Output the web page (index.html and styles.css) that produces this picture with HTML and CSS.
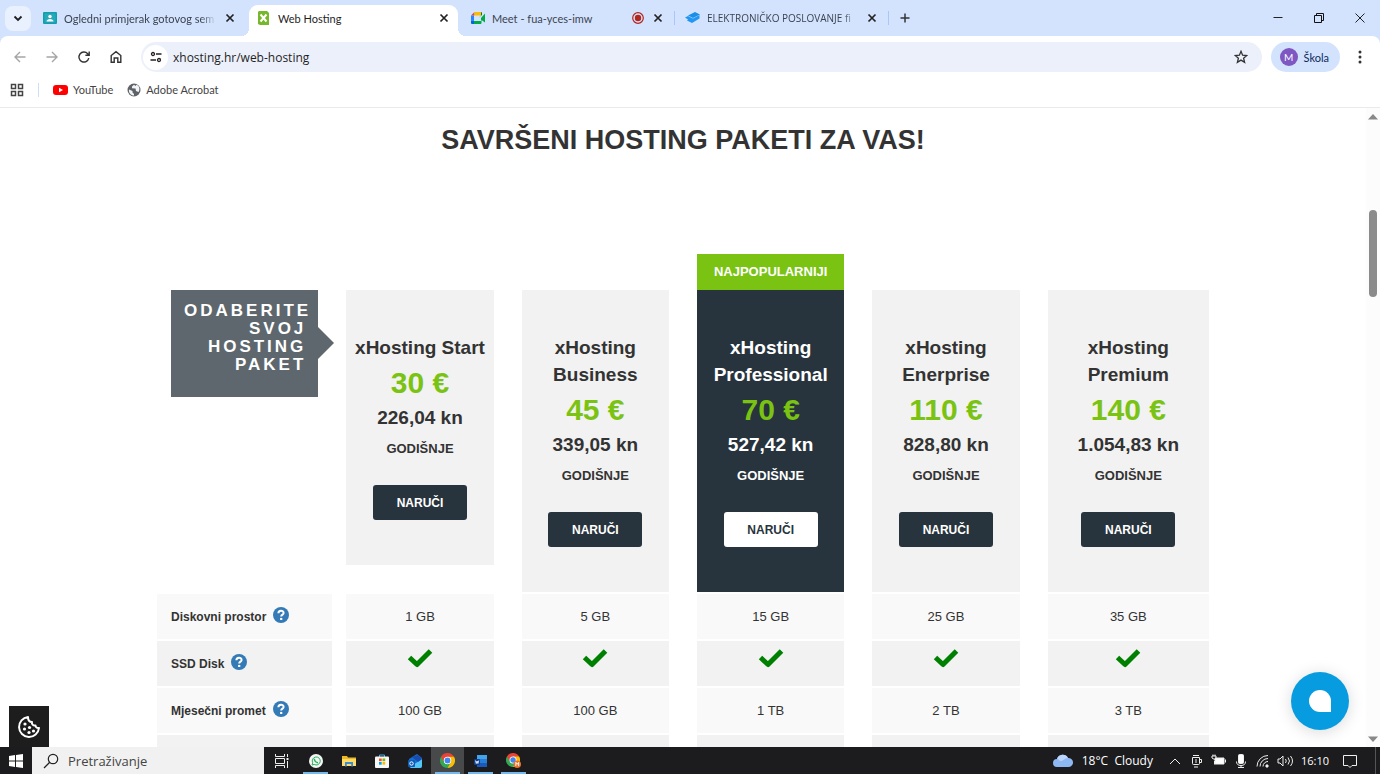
FILE: index.html
```html
<!DOCTYPE html>
<html lang="hr">
<head>
    <meta charset="UTF-8">
    <meta name="viewport" content="width=device-width, initial-scale=1.0">
    <title>Web Hosting</title>
    <link rel="stylesheet" href="styles.css">
</head>
<body>
    <!-- shared icons -->
    <svg class="defs" aria-hidden="true">
        <symbol id="i-x" viewBox="0 0 14 14"><path d="M3.5 3.5l7 7M10.500 3.500l-7 7" stroke="currentColor" stroke-width="1.7" fill="none"/></symbol>
        <symbol id="i-check" viewBox="0 0 26 20"><path d="M2.500 9.500L10 16.500L23.500 3" stroke="#008000" stroke-width="5" fill="none" stroke-linejoin="round"/></symbol>
        <symbol id="i-help" viewBox="0 0 16 16"><circle cx="8" cy="8" r="8" fill="#337ab7"/><path d="M5.400 6.200C5.400 2.900 10.600 2.900 10.600 5.900C10.600 7.700 8.200 7.600 8.200 9.600" stroke="#fff" stroke-width="2" fill="none"/><path d="M7.100 10.900h2.200v2.100H7.100z" fill="#fff"/></symbol>
        <symbol id="i-chrome" viewBox="0 0 16 16"><path d="M8 8L1.070 4A8 8 0 0 1 14.930 4z" fill="#ea4335"/><path d="M8 8L14.930 4A8 8 0 0 1 8 16z" fill="#fbbc04"/><path d="M8 8V16A8 8 0 0 1 1.070 4z" fill="#34a853"/><path d="M8 4h6.900L11.500 10z" fill="#fbbc04"/><path d="M1.100 4l3.500 6L8 4z" fill="#ea4335"/><path d="M4.500 10L8 16l3.500-6z" fill="#34a853"/><circle cx="8" cy="8" r="4" fill="#fff"/><circle cx="8" cy="8" r="3.100" fill="#4285f4"/></symbol>
    </svg>

    <header class="browser">
        <div class="tabstrip">
            <button class="tab-search" aria-label="Pretraži kartice"><svg width="12" height="12" viewBox="0 0 12 12"><path d="M2.500 4.500L6 8l3.500-3.500" stroke="#1f1f1f" stroke-width="1.800" fill="none"/></svg></button>
            <div class="tab">
                <svg width="14" height="14" viewBox="0 0 14 14"><rect y="1" width="14" height="12" rx="1" fill="#129eaf"/><rect x="1.500" y="2.500" width="11" height="9" fill="#26a9b8"/><circle cx="7" cy="5.500" r="1.700" fill="#fff"/><path d="M3.500 10.500c0-3.500 7-3.500 7 0z" fill="#fff"/></svg>
                <span class="tab-title faded">Ogledni primjerak gotovog sem</span>
                <button class="tab-close" aria-label="Zatvori"><svg width="14" height="14"><use href="#i-x"/></svg></button>
            </div>
            <span class="tab-sep"></span>
            <div class="tab active">
                <svg width="14" height="14" viewBox="0 0 14 14"><path d="M2 0h8l2 2v12H3l-2-1V1z" fill="#76b82a"/><path d="M3.500 3.500l6 7M9.500 3.500l-6 7" stroke="#fff" stroke-width="2"/></svg>
                <span class="tab-title">Web Hosting</span>
                <button class="tab-close" aria-label="Zatvori"><svg width="14" height="14"><use href="#i-x"/></svg></button>
            </div>
            <span class="tab-sep"></span>
            <div class="tab">
                <svg width="14" height="14" viewBox="0 0 14 14"><path d="M0 4.500L3.500 1v3.500z" fill="#ea4335"/><path d="M3.500 1h6.500v3.500h-6.500z" fill="#fbbc04"/><path d="M0 4.500h3v5H0z" fill="#2684fc"/><path d="M0 9.500h3V13H1q-1 0-1-1z" fill="#0066da"/><path d="M3 10h7V7l4-4.500v9L10.500 9v3q0 1-1 1H3z" fill="#00ac47"/><path d="M7.500 7L11 4V2q0-1-1-1v3.500z" fill="#00832d"/></svg>
                <span class="tab-title">Meet - fua-yces-imw</span>
                <svg class="rec" width="12" height="12" viewBox="0 0 12 12"><circle cx="6" cy="6" r="5.300" fill="none" stroke="#b3261e" stroke-width="1.200"/><circle cx="6" cy="6" r="3.200" fill="#b3261e"/></svg>
                <button class="tab-close" aria-label="Zatvori"><svg width="14" height="14"><use href="#i-x"/></svg></button>
            </div>
            <span class="tab-sep shown"></span>
            <div class="tab">
                <svg width="15" height="14" viewBox="0 0 15 14"><path d="M3 4.500L10 1l5 2.500L8 7z" fill="#1a8fe8"/><path d="M0 6.500l3-1.500 5 2.500L14.500 4v3.500L7 12l-5-2.500 1-1z" fill="#2196f3"/></svg>
                <span class="tab-title faded caps">ELEKTRONIČKO POSLOVANJE fi</span>
                <button class="tab-close" aria-label="Zatvori"><svg width="14" height="14"><use href="#i-x"/></svg></button>
            </div>
            <span class="tab-sep shown"></span>
            <button class="tab-new" aria-label="Nova kartica"><svg width="12" height="12" viewBox="0 0 12 12"><path d="M6 1.500v9M1.500 6h9" stroke="#333" stroke-width="1.500"/></svg></button>
            <div class="win-controls">
                <button aria-label="Smanji"><svg width="12" height="12" viewBox="0 0 12 12"><path d="M1.500 5.500h9" stroke="#222"/></svg></button>
                <button aria-label="Vrati"><svg width="12" height="12" viewBox="0 0 12 12"><path d="M1.500 3.500h7v7h-7zM3.500 3.500v-2h7v7h-2" stroke="#111" fill="none"/></svg></button>
                <button aria-label="Zatvori prozor"><svg width="12" height="12" viewBox="0 0 12 12"><path d="M1.500 1.500l9 9M10.500 1.500l-9 9" stroke="#222"/></svg></button>
            </div>
        </div>

        <div class="toolbar">
            <button class="nav off" aria-label="Natrag"><svg width="14" height="14" viewBox="0 0 14 14"><path d="M12.500 7H2.500M7 2L2 7l5 5"/></svg></button>
            <button class="nav off" aria-label="Naprijed"><svg width="14" height="14" viewBox="0 0 14 14"><path d="M1.500 7h10M7 2l5 5-5 5"/></svg></button>
            <button class="nav" aria-label="Osvježi"><svg width="14" height="14" viewBox="0 0 14 14"><path d="M11.800 8.200A5 5 0 1 1 10.700 3.700L12 5M12.200 1.500V5.300H8.400"/></svg></button>
            <button class="nav" aria-label="Početna"><svg width="14" height="14" viewBox="0 0 14 14"><path d="M2.200 12.300V5.500L7 1.700l4.800 3.800v6.800H8.800V8H5.200v4.300z"/></svg></button>
            <div class="omnibox">
                <button class="site-info" aria-label="Informacije o web-lokaciji"><svg width="12" height="12" viewBox="0 0 12 12"><path d="M6 3h5.500M.5 9H6" stroke="#222" stroke-width="1.400"/><circle cx="3" cy="3" r="1.500" fill="none" stroke="#222" stroke-width="1.300"/><circle cx="9" cy="9" r="1.500" fill="none" stroke="#222" stroke-width="1.300"/></svg></button>
                <input class="url" type="text" aria-label="Adresa" value="xhosting.hr/web-hosting">
                <button class="star" aria-label="Označi"><svg width="14" height="14" viewBox="0 0 14 14"><path d="M7 1.300l1.600 3.900 4.200.3-3.200 2.700 1 4.100L7 10.100l-3.600 2.200 1-4.100L1.200 5.500l4.200-.3z" fill="none" stroke="#333" stroke-width="1.300"/></svg></button>
            </div>
            <button class="profile"><span class="avatar">M</span>Škola</button>
            <button class="menu" aria-label="Izbornik"><svg width="4" height="14" viewBox="0 0 4 14"><circle cx="2" cy="2" r="1.500"/><circle cx="2" cy="7" r="1.500"/><circle cx="2" cy="12" r="1.500"/></svg></button>
        </div>

        <nav class="bookmarks">
            <button class="apps" aria-label="Aplikacije"><svg width="14" height="14" viewBox="0 0 14 14"><path d="M1.500 1.500h4v4h-4zM8.500 1.500h4v4h-4zM1.500 8.500h4v4h-4zM8.500 8.500h4v4h-4z" fill="none" stroke="#444" stroke-width="1.500"/></svg></button>
            <a href="#"><svg width="15" height="12" viewBox="0 0 15 12"><rect y="1" width="15" height="10" rx="3" fill="#f00"/><path d="M6 3.800v4.400L10 6z" fill="#fff"/></svg>YouTube</a>
            <a href="#"><svg width="14" height="14" viewBox="0 0 14 14"><circle cx="7" cy="7" r="6.500" fill="#5f6368"/><path d="M2 6.500l3.500 1.500v1.500L7 11v1.500C4 12.500 1.500 10 2 6.500zM7 1.800L5 3.500v1.700l3.500.3L9 8l2.500 1c2-3 .5-6.500-2-7.300L8.500 3z" fill="#f2f4f7"/></svg>Adobe Acrobat</a>
        </nav>
    </header>

    <div class="viewport">
        <main class="page">
            <h1>SAVRŠENI HOSTING PAKETI ZA VAS!</h1>
            <table class="plans">
                <thead>
                    <tr>
                        <td><div class="choose">ODABERITE SVOJ HOSTING PAKET</div></td>
                        <th><div class="card">
                            <h2>xHosting Start</h2>
                            <p class="eur">30 €</p>
                            <p class="kn">226,04 kn</p>
                            <p class="period">GODIŠNJE</p>
                            <button class="order">NARUČI</button>
                        </div></th>
                        <th><div class="card">
                            <h2>xHosting Business</h2>
                            <p class="eur">45 €</p>
                            <p class="kn">339,05 kn</p>
                            <p class="period">GODIŠNJE</p>
                            <button class="order">NARUČI</button>
                        </div></th>
                        <th><div class="card popular">
                            <span class="ribbon">NAJPOPULARNIJI</span>
                            <h2>xHosting Professional</h2>
                            <p class="eur">70 €</p>
                            <p class="kn">527,42 kn</p>
                            <p class="period">GODIŠNJE</p>
                            <button class="order">NARUČI</button>
                        </div></th>
                        <th><div class="card">
                            <h2>xHosting Enerprise</h2>
                            <p class="eur">110 €</p>
                            <p class="kn">828,80 kn</p>
                            <p class="period">GODIŠNJE</p>
                            <button class="order">NARUČI</button>
                        </div></th>
                        <th><div class="card">
                            <h2>xHosting Premium</h2>
                            <p class="eur">140 €</p>
                            <p class="kn">1.054,83 kn</p>
                            <p class="period">GODIŠNJE</p>
                            <button class="order">NARUČI</button>
                        </div></th>
                    </tr>
                </thead>
                <tbody>
                    <tr>
                        <th scope="row"><div class="label">Diskovni prostor <svg width="16" height="16"><use href="#i-help"/></svg></div></th>
                        <td><div class="value">1 GB</div></td>
                        <td><div class="value">5 GB</div></td>
                        <td><div class="value">15 GB</div></td>
                        <td><div class="value">25 GB</div></td>
                        <td><div class="value">35 GB</div></td>
                    </tr>
                    <tr>
                        <th scope="row"><div class="label">SSD Disk <svg width="16" height="16"><use href="#i-help"/></svg></div></th>
                        <td><div class="value"><svg width="26" height="20"><use href="#i-check"/></svg></div></td>
                        <td><div class="value"><svg width="26" height="20"><use href="#i-check"/></svg></div></td>
                        <td><div class="value"><svg width="26" height="20"><use href="#i-check"/></svg></div></td>
                        <td><div class="value"><svg width="26" height="20"><use href="#i-check"/></svg></div></td>
                        <td><div class="value"><svg width="26" height="20"><use href="#i-check"/></svg></div></td>
                    </tr>
                    <tr>
                        <th scope="row"><div class="label">Mjesečni promet <svg width="16" height="16"><use href="#i-help"/></svg></div></th>
                        <td><div class="value">100 GB</div></td>
                        <td><div class="value">100 GB</div></td>
                        <td><div class="value">1 TB</div></td>
                        <td><div class="value">2 TB</div></td>
                        <td><div class="value">3 TB</div></td>
                    </tr>
                    <tr>
                        <th scope="row"><div class="label"></div></th>
                        <td><div class="value"></div></td>
                        <td><div class="value"></div></td>
                        <td><div class="value"></div></td>
                        <td><div class="value"></div></td>
                        <td><div class="value"></div></td>
                    </tr>
                </tbody>
            </table>
        </main>
        <div class="scrollbar">
            <svg width="10" height="6" viewBox="0 0 10 6"><path d="M5 0l5 5.500H0z" fill="#888"/></svg>
            <div class="thumb"></div>
            <svg width="10" height="6" viewBox="0 0 10 6"><path d="M5 6l5-5.500H0z" fill="#888"/></svg>
        </div>
        <button class="cookies" aria-label="Kolačići"><svg width="24" height="24" viewBox="0 0 24 24"><path d="M11 2A10 10 0 1 0 22 13C20 13.500 18.500 12 18.500 10.500C16 11 14.500 9 15 7C12.500 7 11 5 11 2z" fill="none" stroke="#fff" stroke-width="2" stroke-linejoin="round"/><g fill="#fff"><circle cx="8" cy="9" r="1.600"/><circle cx="7.500" cy="14" r="1.600"/><circle cx="12.500" cy="12.500" r="1.600"/><circle cx="12" cy="17.500" r="1.600"/><circle cx="16.500" cy="16" r="1.600"/></g></svg></button>
        <button class="chat" aria-label="Chat"><svg width="22" height="22" viewBox="0 0 22 22"><path d="M11 0A11 11 0 0 1 22 11V22H11A11 11 0 0 1 11 0z" fill="#fff"/></svg></button>
    </div>

    <footer class="taskbar">
        <button class="start" aria-label="Start"><svg width="16" height="16" viewBox="0 0 16 16"><path d="M1 3l6-.9v5.400H1zM8 2l7-1v6.500H8zM1 8.500h6v5.400L1 13zM8 8.500h7V15l-7-1z" fill="#fff"/></svg></button>
        <label class="search">
            <svg width="16" height="16" viewBox="0 0 16 16"><circle cx="10" cy="6" r="4.700" fill="none" stroke="#222" stroke-width="1.200"/><path d="M6.700 9.300L1 15" stroke="#222" stroke-width="1.300"/></svg>
            <input type="text" placeholder="Pretraživanje" aria-label="Pretraživanje">
        </label>
        <button class="task-view" aria-label="Prikaz zadataka"><svg width="16" height="16" viewBox="0 0 16 16"><path d="M1.500 1v2.500h9V1M1.500 5.500h9v5h-9zM1.500 15v-2.500h9V15M13.500 1v3M13.500 8v7" fill="none" stroke="#eee"/><path d="M12.500 5h2v2h-2z" fill="#eee"/></svg></button>
        <div class="apps-bar">
            <button class="open" aria-label="WhatsApp"><svg width="14" height="14" viewBox="0 0 14 14"><circle cx="7" cy="7" r="7" fill="#f4f4f4"/><path d="M3 11l.7-2.200A4 4 0 1 1 5.200 10.400z" fill="none" stroke="#25b35a"/><path d="M5.300 4.800c.2 2.300 1.800 3.700 3.700 3.900" fill="none" stroke="#25b35a" stroke-width="1.400"/></svg></button>
            <button aria-label="Eksplorer"><svg width="14" height="14" viewBox="0 0 14 14"><path d="M0 2h5l1 1.500h8V12H0z" fill="#f2b91f"/><path d="M0 5h14v7H0z" fill="#ffdc69"/><path d="M3 8h8v4.500H9.200V10H4.800v2.500H3z" fill="#3a8ad6"/></svg></button>
            <button aria-label="Store"><svg width="14" height="14" viewBox="0 0 14 14"><path d="M4.500 3V1h5v2" fill="none" stroke="#43b1e5"/><rect y="2.500" width="14" height="11.500" rx="1" fill="#f7f7f7"/><path d="M4 4.500h2.700v2.700H4z" fill="#f25022"/><path d="M7.500 4.500h2.700v2.700H7.500z" fill="#7fba00"/><path d="M4 8h2.700v2.700H4z" fill="#00a4ef"/><path d="M7.500 8h2.700v2.700H7.500z" fill="#ffb900"/></svg></button>
            <button aria-label="Outlook"><svg width="14" height="14" viewBox="0 0 14 14"><path d="M1 5l8-5 5 4v8q0 2-2 2H3q-2 0-2-2z" fill="#1270d4"/><path d="M2 13L14 5v7q0 2-2 2H3z" fill="#54c5f5"/><path d="M4 3l6 5 4-3-4-4z" fill="#1a4bb0"/><rect y="6" width="7" height="7" rx="1" fill="#0f5bb5"/><circle cx="3.500" cy="9.500" r="1.700" fill="none" stroke="#fff"/></svg></button>
            <button class="open current" aria-label="Chrome"><svg width="15" height="15"><use href="#i-chrome"/></svg></button>
            <button class="open" aria-label="Word"><svg width="14" height="14" viewBox="0 0 14 14"><path d="M3 1h10v4H3z" fill="#41a5ee"/><path d="M3 5h10v4H3z" fill="#2b7cd3"/><path d="M3 9h10v4H3z" fill="#185abd"/><rect y="5" width="6" height="6" rx="1" fill="#103f91"/><path d="M1.500 6.500l.8 3 .8-2.500.8 2.500.8-3" fill="none" stroke="#fff" stroke-width=".8"/></svg></button>
            <button class="open" aria-label="Chrome profil"><svg width="15" height="15" viewBox="0 0 16 16"><use href="#i-chrome" width="15" height="15"/><circle cx="12" cy="12" r="4" fill="#e8702a"/><path d="M10.500 14v-4l1.500 2 1.500-2v4" fill="none" stroke="#fff"/></svg></button>
        </div>
        <div class="tray">
            <svg width="22" height="15" viewBox="0 0 22 15"><path d="M5 14a4 4 0 0 1 0-8A6 6 0 0 1 16 5a4.500 4.500 0 0 1 1 9z" fill="#8db8f4"/><path d="M5 6A6 6 0 0 1 16 5C12 5 12 8 9 8 7 8 7 6 5 6z" fill="#bcd5fa"/></svg>
            <span class="weather">18°C&nbsp; Cloudy</span>
            <div class="tray-icons">
                <svg width="16" height="16" viewBox="0 0 16 16"><path d="M3 11l5-5 5 5"/></svg>
                <svg width="16" height="16" viewBox="0 0 16 16"><path d="M3.500 4.500h7v6q0 1-1 1h-5q-1 0-1-1zM10.500 6.500h2v3h-2M4 2.500h6M5 14h4M7 6v4"/></svg>
                <svg width="16" height="16" viewBox="0 0 16 16"><path d="M4 5h9v6H4z" fill="#fff"/><path d="M14.500 6.500v3M3.500 11.500V8M1 3h4v2L3.500 6.500 1 5zM2 1.500V3M4 1.500V3"/></svg>
                <svg width="16" height="16" viewBox="0 0 16 16"><rect x="5.500" y="1.500" width="5" height="9" rx="1" fill="#fff"/><path d="M3.500 8.500q0 4 4.500 4t4.500-4M8 12v3M5 14.500h6"/></svg>
                <svg width="16" height="16" viewBox="0 0 16 16"><path d="M2 13.500A11 11 0 0 1 13 2.500M5 13.500a8 8 0 0 1 8-8M8 13.500a5 5 0 0 1 5-5"/><circle cx="12" cy="13" r="1.200" fill="#fff"/></svg>
                <svg width="16" height="16" viewBox="0 0 16 16"><path d="M1 6h2l3-3v10l-3-3H1zM8.500 6q1.500 2 0 4M11 4.500q3 3.500 0 7M13.500 3q4 5 0 10"/></svg>
            </div>
            <time>16:10</time>
            <button class="notice" aria-label="Obavijesti"><svg width="16" height="16" viewBox="0 0 16 16"><path d="M1.500 2.500h13v10h-4.500l-2 2-2-2H1.500z" fill="none" stroke="#eee"/></svg></button>
            <span class="desktop-edge"></span>
        </div>
    </footer>
</body>
</html>
```

FILE: styles.css
```css
* {
    box-sizing: border-box;
}

body {
    margin: 0;
    height: 100vh;
    display: flex;
    flex-direction: column;
    overflow: hidden;
    background: #fff;
    color: #333;
    font-family: "Open Sans", "Noto Sans", sans-serif;
    font-size: 11px;
}

button {
    border: 0;
    padding: 0;
    background: none;
    font: inherit;
    color: inherit;
    display: flex;
    align-items: center;
    justify-content: center;
    cursor: pointer;
}

svg {
    flex: none;
}

.defs {
    position: absolute;
    width: 0;
    height: 0;
}

/* browser window */
.browser {
    background: #d3e3fd;
    flex: none;
    font-family: Lato, "Open Sans", sans-serif;
}

.tabstrip {
    display: flex;
    align-items: center;
    height: 36px;
    padding-left: 5px;
}

.tab-search {
    width: 26px;
    height: 25px;
    margin-right: 4px;
    border-radius: 8px;
    background: #e9f1fe;
}

.tab {
    position: relative;
    display: flex;
    align-items: center;
    gap: 7px;
    width: 209px;
    height: 31px;
    margin-top: 5px;
    padding: 0 7px 5px 8px;
    color: #3c4350;
}

.tab.active {
    background: #fff;
    border-radius: 9px 9px 0 0;
    color: #1f1f1f;
}

/* flared feet of the active tab */
.tab.active::before,
.tab.active::after {
    content: "";
    position: absolute;
    bottom: 0;
    width: 8px;
    height: 8px;
}

.tab.active::before {
    right: 100%;
    background: radial-gradient(circle at 0 0, #d3e3fd 8px, #fff 8px);
}

.tab.active::after {
    left: 100%;
    background: radial-gradient(circle at 100% 0, #d3e3fd 8px, #fff 8px);
}

.tab-title {
    flex: 1;
    overflow: hidden;
    white-space: nowrap;
}

.tab-title.faded {
    -webkit-mask-image: linear-gradient(to right, #000 90%, transparent);
    mask-image: linear-gradient(to right, #000 90%, transparent);
}

.tab-title.caps {
    font-family: "Open Sans", "Noto Sans", sans-serif;
    font-size: 10px;
}

.tab-close {
    color: #222;
}

.tab-sep {
    width: 1px;
    height: 14px;
    margin: 0 2px;
}

.tab-sep.shown {
    background: #a8c7fa;
}

.tab-new {
    width: 28px;
    height: 28px;
}

.win-controls {
    display: flex;
    margin-left: auto;
}

.win-controls button {
    width: 41px;
    height: 36px;
}

.toolbar {
    display: flex;
    align-items: center;
    height: 40px;
    padding: 2px 8px 0 4px;
    background: #fff;
    border-radius: 8px 8px 0 0;
}

.nav {
    width: 32px;
    height: 32px;
}

.nav svg {
    fill: none;
    stroke: #333;
    stroke-width: 1.4;
}

.nav.off svg {
    stroke: #a5a5a5;
}

.omnibox {
    flex: 1;
    display: flex;
    align-items: center;
    height: 30px;
    margin-left: 9px;
    padding: 0 14px 0 2px;
    border-radius: 15px;
    background: #ecf0fa;
}

.site-info {
    width: 25px;
    height: 25px;
    border-radius: 50%;
    background: #fff;
}

.url {
    flex: 1;
    min-width: 0;
    padding: 0 5px;
    border: 0;
    background: none;
    outline: none;
    font-family: "Open Sans", "Noto Sans", sans-serif;
    font-size: 12px;
    color: #1f1f1f;
}

.profile {
    gap: 6px;
    height: 30px;
    margin-left: 9px;
    padding: 0 11px 0 9px;
    border-radius: 15px;
    background: #d3e3fd;
    color: #0b2a5c;
}

.avatar {
    width: 18px;
    line-height: 18px;
    border-radius: 50%;
    background: #7e57c2;
    color: #fff;
    font-size: 10px;
}

.menu {
    width: 24px;
    height: 30px;
    margin-left: 8px;
    fill: #333;
}

.bookmarks {
    display: flex;
    align-items: center;
    gap: 14px;
    height: 32px;
    padding: 0 10px 4px;
    background: #fff;
    border-bottom: 1px solid #e8eaed;
}

.bookmarks a {
    display: flex;
    align-items: center;
    gap: 5px;
    color: #444;
    text-decoration: none;
}

.apps {
    padding-right: 14px;
    border-right: 1px solid #cfdef7;
}

/* page */
.viewport {
    position: relative;
    flex: 1;
    min-height: 0;
    display: flex;
    overflow: hidden;
    font-family: "Liberation Sans", Arial, sans-serif;
}

.page {
    flex: 1;
    padding: 16px 20px 0;
}

h1 {
    margin: 0 0 132px;
    font-size: 27px;
    line-height: 32px;
    text-align: center;
}

.plans {
    table-layout: fixed;
    width: 100%;
    max-width: 1052px;
    margin: 0 auto;
    border-spacing: 0 2px;
}

.plans td,
.plans th {
    padding: 0 14px;
    vertical-align: top;
}

.plans tr > :last-child {
    padding-right: 0;
}

.plans tbody th {
    padding: 0;
}

.choose {
    position: relative;
    padding: 12px 12px 23px 13px;
    background: #5e676d;
    color: #fff;
    font-size: 17px;
    font-weight: bold;
    line-height: 18px;
    letter-spacing: 3px;
    text-align: right;
}

.choose::after {
    content: "";
    position: absolute;
    left: 100%;
    top: 37px;
    border: 16px solid transparent;
    border-left-color: #5e676d;
    border-right: 0;
}

.card {
    position: relative;
    display: flex;
    flex-direction: column;
    align-items: center;
    padding: 44px 8px 45px;
    background: #f2f2f2;
}

.card h2,
.card p {
    margin: 0;
    font-size: 19px;
    line-height: 27px;
}

.card .eur {
    font-size: 30px;
    line-height: 43px;
    color: #7ac313;
}

.card .period {
    margin-top: 9px;
    font-size: 13px;
    line-height: 18px;
}

.order {
    width: 94px;
    height: 35px;
    margin-top: 27px;
    border-radius: 3px;
    background: #28343d;
    color: #fff;
    font-size: 12px;
    font-weight: bold;
}

.card.popular {
    background: #28343d;
    color: #fff;
}

.popular .order {
    background: #fff;
    color: #28343d;
}

.ribbon {
    position: absolute;
    left: 0;
    right: 0;
    bottom: 100%;
    background: #7ac313;
    font-size: 13px;
    line-height: 36px;
}

.label,
.value {
    display: flex;
    align-items: center;
    height: 45px;
    background: #f9f9f9;
}

.label {
    gap: 7px;
    padding-left: 14px;
    font-size: 12px;
}

.label svg {
    margin-bottom: 3px;
}

.value {
    justify-content: center;
    font-size: 13px;
}

.value svg {
    margin-bottom: 11px;
}

tbody tr:nth-child(even) .label,
tbody tr:nth-child(even) .value {
    background: #f2f2f2;
}

.scrollbar {
    display: flex;
    flex-direction: column;
    align-items: center;
    justify-content: space-between;
    width: 14px;
    padding: 6px 0 5px;
    background: #fcfcfc;
}

.thumb {
    width: 8px;
    height: 87px;
    margin: 90px 0 auto;
    border-radius: 4px;
    background: #8b8b8b;
}

.cookies {
    position: absolute;
    left: 9px;
    bottom: 0;
    width: 40px;
    height: 41px;
    background: #1d1d1d;
}

.chat {
    position: absolute;
    right: 31px;
    bottom: 17px;
    width: 58px;
    height: 58px;
    border-radius: 50%;
    background: #079ce0;
    box-shadow: 0 2px 16px rgba(0, 0, 0, 0.15);
}

/* taskbar */
.taskbar {
    flex: none;
    display: flex;
    height: 27px;
    background: #1c1c1f;
    color: #fff;
}

.start {
    width: 32px;
}

.search {
    display: flex;
    align-items: center;
    gap: 9px;
    width: 232px;
    padding-left: 11px;
    background: #f1f1f1;
}

.search input {
    flex: 1;
    min-width: 0;
    padding: 0;
    border: 0;
    background: none;
    outline: none;
    font: inherit;
    font-size: 13px;
}

.search input::placeholder {
    color: #444;
}

.task-view {
    width: 35px;
}

.apps-bar {
    display: flex;
}

.apps-bar button {
    position: relative;
    width: 33px;
}

.apps-bar .current {
    background: #47494b;
}

.apps-bar .open::after {
    content: "";
    position: absolute;
    left: 4px;
    right: 4px;
    bottom: 0;
    height: 2px;
    background: #76b9ed;
}

.tray {
    display: flex;
    align-items: center;
    margin-left: auto;
}

.weather {
    margin: 0 14px 0 8px;
    font-size: 12px;
}

.tray-icons {
    display: flex;
    gap: 6px;
    fill: none;
    stroke: #eee;
}

.tray time {
    margin: 0 13px 0 8px;
}

.desktop-edge {
    width: 5px;
    height: 100%;
    margin-left: 17px;
    border-left: 1px solid #555;
}
```
